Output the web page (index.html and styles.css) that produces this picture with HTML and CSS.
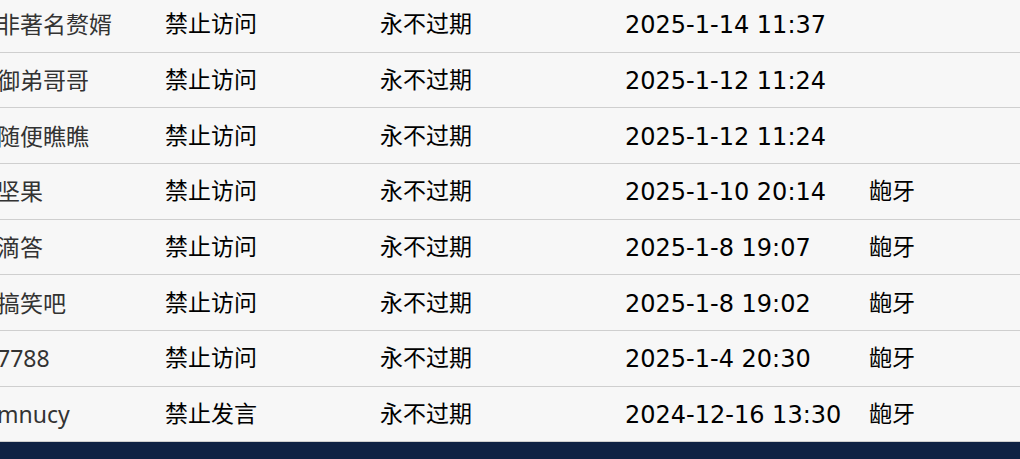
FILE: index.html
```html
<!DOCTYPE html>
<html lang="zh-CN">
<head>
<meta charset="utf-8">
<title>封禁列表</title>
<link rel="stylesheet" href="styles.css">
</head>
<body>
<div class="list">
  <div class="row"><span class="c name">非著名赘婿</span><span class="c type">禁止访问</span><span class="c exp">永不过期</span><span class="c time">2025-1-14 11:37</span><span class="c op"></span></div>
  <div class="row"><span class="c name">御弟哥哥</span><span class="c type">禁止访问</span><span class="c exp">永不过期</span><span class="c time">2025-1-12 11:24</span><span class="c op"></span></div>
  <div class="row"><span class="c name">随便瞧瞧</span><span class="c type">禁止访问</span><span class="c exp">永不过期</span><span class="c time">2025-1-12 11:24</span><span class="c op"></span></div>
  <div class="row"><span class="c name">坚果</span><span class="c type">禁止访问</span><span class="c exp">永不过期</span><span class="c time">2025-1-10 20:14</span><span class="c op">龅牙</span></div>
  <div class="row"><span class="c name">滴答</span><span class="c type">禁止访问</span><span class="c exp">永不过期</span><span class="c time">2025-1-8 19:07</span><span class="c op">龅牙</span></div>
  <div class="row"><span class="c name">搞笑吧</span><span class="c type">禁止访问</span><span class="c exp">永不过期</span><span class="c time">2025-1-8 19:02</span><span class="c op">龅牙</span></div>
  <div class="row"><span class="c name">7788</span><span class="c type">禁止访问</span><span class="c exp">永不过期</span><span class="c time">2025-1-4 20:30</span><span class="c op">龅牙</span></div>
  <div class="row"><span class="c name">mnucy</span><span class="c type">禁止发言</span><span class="c exp">永不过期</span><span class="c time">2024-12-16 13:30</span><span class="c op">龅牙</span></div>
</div>
<footer class="footer"></footer>
</body>
</html>
```
FILE: styles.css
```css
html, body {
  margin: 0;
  padding: 0;
  background: #f7f7f7;
  overflow: hidden;
}
.list {
  margin-top: -3px;
}
.row {
  display: flex;
  align-items: center;
  height: 54.67px;
  border-bottom: 1px solid #cfcfcf;
  font-family: "DejaVu Sans", "Noto Sans CJK SC", sans-serif;
  font-size: 23px;
  line-height: 30px;
  color: #000;
  white-space: nowrap;
}
.c {
  display: block;
  flex: none;
}
.name {
  width: 168px;
  margin-left: -3px;
  font-family: "Noto Sans", "Noto Sans CJK SC", sans-serif;
  color: #333;
}
.type { width: 215px; }
.exp { width: 245px; }
.time {
  width: 244px;
  font-size: 24px;
  padding-top: 2px;
}
.op { width: 100px; }
.footer {
  height: 30px;
  background: #0f2244;
}
```
